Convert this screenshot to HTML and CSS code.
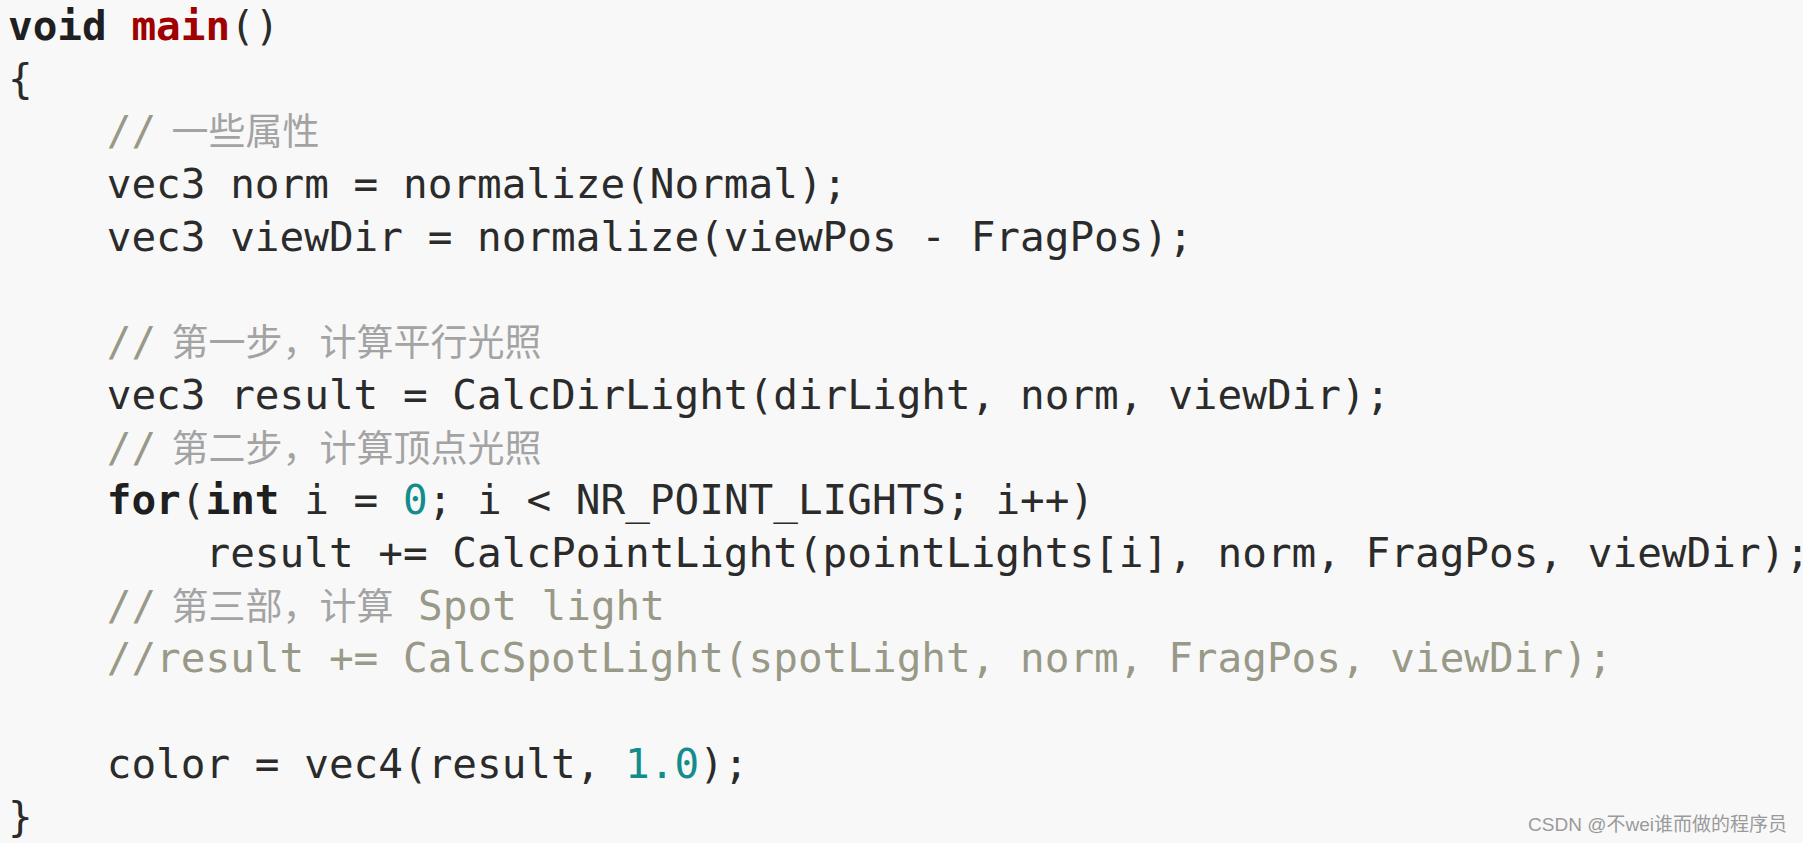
FILE: index.html
```html
<!DOCTYPE html>
<html lang="zh">
<head>
<meta charset="utf-8">
<title>main</title>
<link rel="stylesheet" href="styles.css">
</head>
<body>
<main class="page">
<pre class="code"><span class="k">void</span> <span class="fn">main</span>()
{
    <span class="c">//<span class="cn"> 一些属性</span></span>
    vec3 norm = normalize(Normal);
    vec3 viewDir = normalize(viewPos - FragPos);

    <span class="c">//<span class="cn"> 第一步，计算平行光照</span></span>
    vec3 result = CalcDirLight(dirLight, norm, viewDir);
    <span class="c">//<span class="cn"> 第二步，计算顶点光照</span></span>
    <span class="k">for</span>(<span class="k">int</span> i = <span class="n">0</span>; i &lt; NR_POINT_LIGHTS; i++)
        result += CalcPointLight(pointLights[i], norm, FragPos, viewDir);
    <span class="c">//<span class="cn"> 第三部，计算</span> Spot light</span>
    <span class="c">//result += CalcSpotLight(spotLight, norm, FragPos, viewDir);</span>

    color = vec4(result, <span class="n">1.0</span>);
}</pre>
<div class="watermark">CSDN @不wei谁而做的程序员</div>
</main>
</body>
</html>
```

FILE: styles.css
```css
html, body {
  margin: 0;
  padding: 0;
  background: #f8f8f8;
}

.page {
  position: relative;
  width: 1803px;
  height: 843px;
  overflow: hidden;
}

.code {
  margin: 0;
  padding: 0 0 0 8px;
  font-family: "DejaVu Sans Mono", "Noto Sans CJK SC", monospace;
  font-size: 41px;
  line-height: 52.7px;
  color: #2b2b2b;
  white-space: pre;
}

.k {
  font-weight: bold;
  color: #1f1f1f;
}

.fn {
  font-weight: bold;
  color: #a00000;
}

.n {
  color: #128c8c;
}

.c {
  color: #999988;
}

.cn {
  font-family: "Noto Sans CJK SC", sans-serif;
  font-size: 37px;
  line-height: 0;
  color: #a3a3a3;
  word-spacing: 7px;
}

.watermark {
  position: absolute;
  right: 16px;
  bottom: 7px;
  font-family: "Liberation Sans", "Noto Sans CJK SC", sans-serif;
  font-size: 19px;
  color: #9a9a9a;
  line-height: 22px;
}
```
